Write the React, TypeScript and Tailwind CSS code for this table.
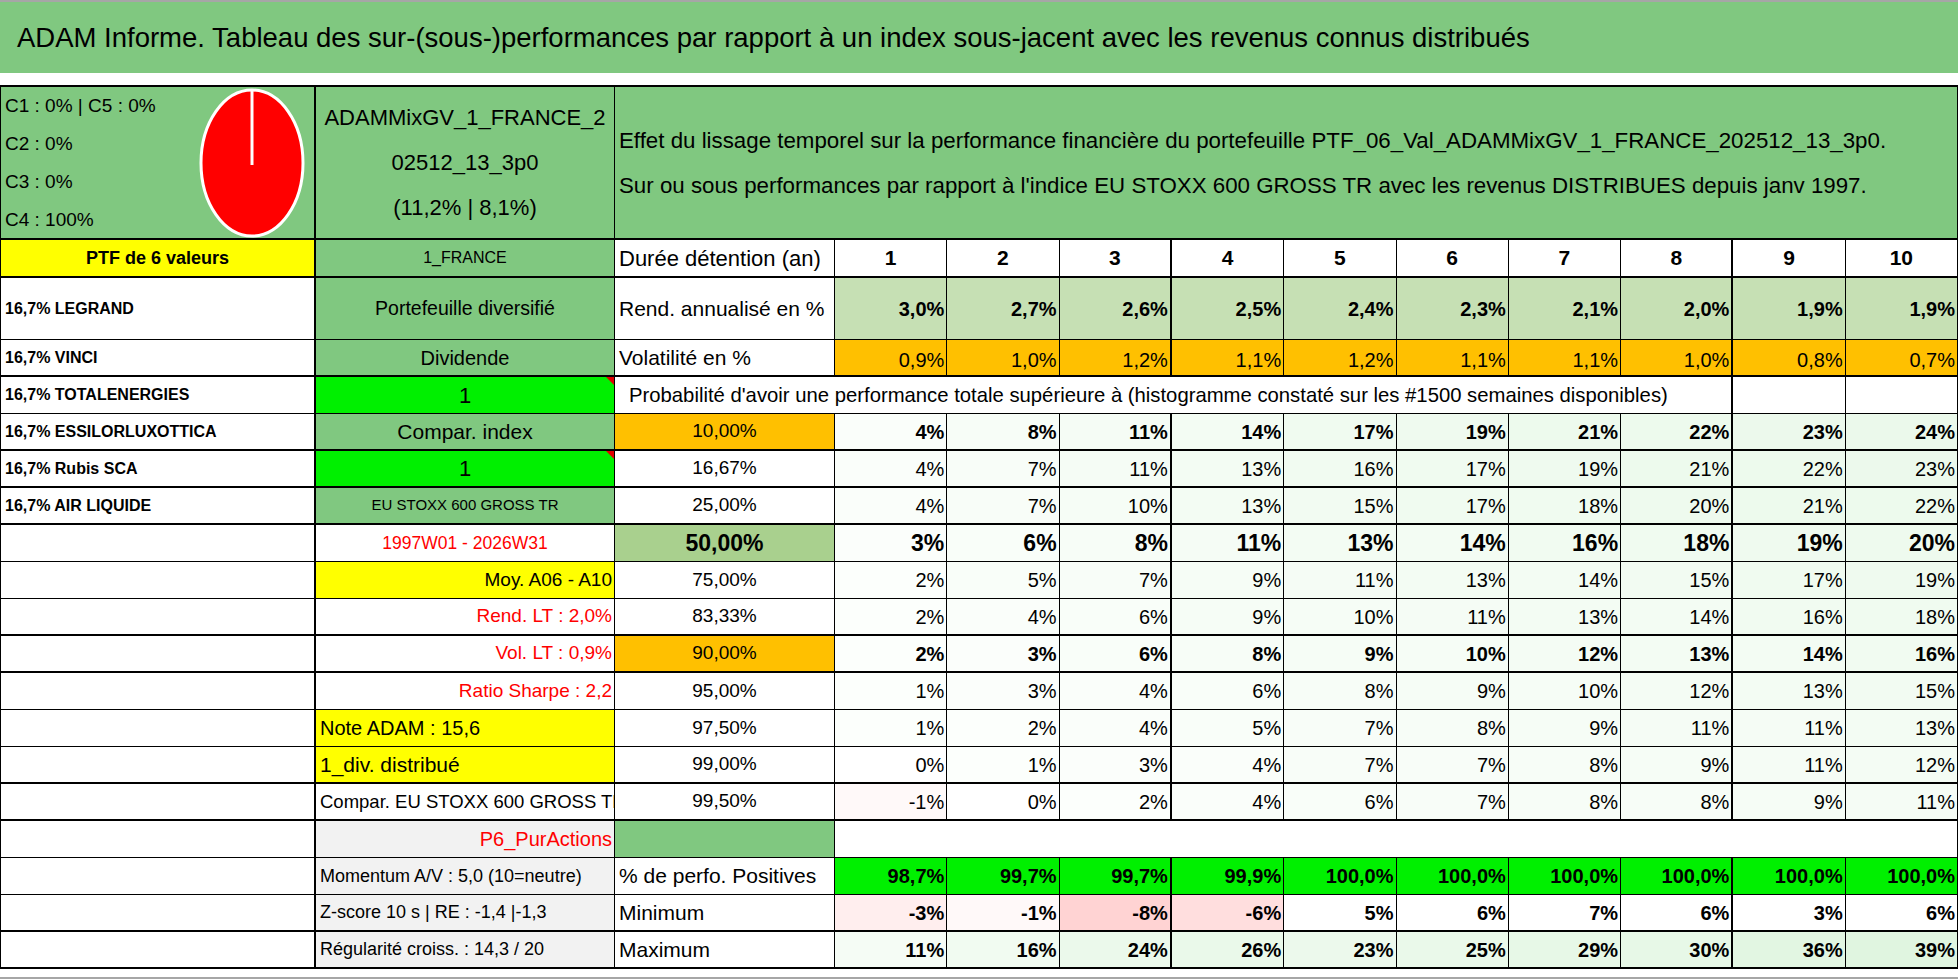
import type { CSSProperties, ReactNode } from 'react'
import clsx from 'clsx'
import { twMerge } from 'tailwind-merge'

const GREEN = 'bg-[#80c880]'
const LIME = 'bg-[#00f000]'
const YELLOW = 'bg-[#ffff00]'
const ORANGE = 'bg-[#ffc000]'
const GREY = 'bg-[#f2f2f2]'

// rows whose bottom line is drawn thick in the sheet
const THICK_ROWS = [0, 1, 3, 5, 6, 7, 10, 11, 14, 15, 18, 19]
const THICK_COLS = [0, 5, 10]
const YEARS = [1, 2, 3, 4, 5, 6, 7, 8, 9, 10]

const REND = ['3,0%', '2,7%', '2,6%', '2,5%', '2,4%', '2,3%', '2,1%', '2,0%', '1,9%', '1,9%']
const VOL = ['0,9%', '1,0%', '1,2%', '1,1%', '1,2%', '1,1%', '1,1%', '1,0%', '0,8%', '0,7%']
const POSITIVES = ['98,7%', '99,7%', '99,7%', '99,9%', '100,0%', '100,0%', '100,0%', '100,0%', '100,0%', '100,0%']
const MINIMUM = [-3, -1, -8, -6, 5, 6, 7, 6, 3, 6]
const MAXIMUM = [11, 16, 24, 26, 23, 25, 29, 30, 36, 39]

const HIST = [
  { pct: '10,00%', vals: [4, 8, 11, 14, 17, 19, 21, 22, 23, 24], bold: true, bg: ORANGE },
  { pct: '16,67%', vals: [4, 7, 11, 13, 16, 17, 19, 21, 22, 23] },
  { pct: '25,00%', vals: [4, 7, 10, 13, 15, 17, 18, 20, 21, 22] },
  { pct: '50,00%', vals: [3, 6, 8, 11, 13, 14, 16, 18, 19, 20], bold: true, big: true, bg: 'bg-[#a9d08e]' },
  { pct: '75,00%', vals: [2, 5, 7, 9, 11, 13, 14, 15, 17, 19] },
  { pct: '83,33%', vals: [2, 4, 6, 9, 10, 11, 13, 14, 16, 18] },
  { pct: '90,00%', vals: [2, 3, 6, 8, 9, 10, 12, 13, 14, 16], bold: true, bg: ORANGE },
  { pct: '95,00%', vals: [1, 3, 4, 6, 8, 9, 10, 12, 13, 15] },
  { pct: '97,50%', vals: [1, 2, 4, 5, 7, 8, 9, 11, 11, 13] },
  { pct: '99,00%', vals: [0, 1, 3, 4, 7, 7, 8, 9, 11, 12] },
  { pct: '99,50%', vals: [-1, 0, 2, 4, 6, 7, 8, 8, 9, 11] },
]

const tint = (v: number) => {
  if (v < 0) {
    const d = Math.round(Math.min(-v, 10) * 5.5)
    return `rgb(255,${255 - d},${255 - d})`
  }
  if (v === 0) return '#ffffff'
  const d = Math.min(v, 40)
  const rb = Math.round(253 - d * 0.75)
  return `rgb(${rb},${Math.round(255 - d * 0.25)},${rb})`
}

type CellProps = {
  row: number
  col: number
  span?: number
  className?: string
  style?: CSSProperties
  children?: ReactNode
}

const Cell = ({ row, col, span = 1, className, style, children }: CellProps) => {
  const last = col + span - 1
  return (
    <div
      style={style}
      className={twMerge(
        clsx(
          'relative flex min-w-0 items-center overflow-hidden whitespace-nowrap border-black bg-white',
          THICK_ROWS.includes(row) ? 'border-b-2' : 'border-b',
          THICK_COLS.includes(last) ? 'border-r-2' : 'border-r',
          span === 9 && 'col-span-9',
          span === 10 && 'col-span-10',
          span === 11 && 'col-span-11',
          className,
        ),
      )}
    >
      {children}
    </div>
  )
}

const Flag = () => (
  <span className="absolute right-0 top-0 h-0 w-0 border-l-[8px] border-t-[8px] border-l-transparent border-t-[#e00000]" />
)

const sideB: ReactNode[] = [
  <Cell key="b5" row={5} col={1} className={clsx(GREEN, 'justify-center text-[21px]')}>Compar. index</Cell>,
  <Cell key="b6" row={6} col={1} className={clsx(LIME, 'justify-center text-[22px]')}>1<Flag /></Cell>,
  <Cell key="b7" row={7} col={1} className={clsx(GREEN, 'justify-center text-[15px]')}>EU STOXX 600 GROSS TR</Cell>,
  <Cell key="b8" row={8} col={1} className="justify-center text-[17.5px] text-[#ff0000]">1997W01 - 2026W31</Cell>,
  <Cell key="b9" row={9} col={1} className={clsx(YELLOW, 'justify-end pr-0.5 text-[19px]')}>Moy. A06 - A10</Cell>,
  <Cell key="b10" row={10} col={1} className="justify-end pr-0.5 text-[19px] text-[#ff0000]">Rend. LT : 2,0%</Cell>,
  <Cell key="b11" row={11} col={1} className="justify-end pr-0.5 text-[19px] text-[#ff0000]">Vol. LT : 0,9%</Cell>,
  <Cell key="b12" row={12} col={1} className="justify-end pr-0.5 text-[19px] text-[#ff0000]">Ratio Sharpe : 2,2</Cell>,
  <Cell key="b13" row={13} col={1} className={clsx(YELLOW, 'pl-1 text-[20px]')}>Note ADAM : 15,6</Cell>,
  <Cell key="b14" row={14} col={1} className={clsx(YELLOW, 'pl-1 text-[21px]')}>1_div. distribué</Cell>,
  <Cell key="b15" row={15} col={1} className="pl-1 text-[18.5px]">Compar. EU STOXX 600 GROSS TR</Cell>,
]

const NAMES = ['16,7% ESSILORLUXOTTICA', '16,7% Rubis SCA', '16,7% AIR LIQUIDE']
const NAME_CLS = 'pl-1 text-[16px] font-bold'

export default function App() {
  return (
    <div className="flex h-[979px] w-[1958px] flex-col overflow-hidden bg-white font-['Liberation_Sans',Arial,sans-serif] text-black">
      <div className={clsx(GREEN, 'flex h-[73px] shrink-0 items-center border-t-2 border-[#a6a6a6] pl-[17px] text-[27.5px]')}>
        ADAM Informe. Tableau des sur-(sous-)performances par rapport à un index sous-jacent avec les revenus connus distribués
      </div>
      <div className="h-[12px] shrink-0" />

      <div className="grid w-[1958px] shrink-0 grid-cols-[315px_299px_220px_repeat(10,minmax(0,1fr))] grid-rows-[153px_38px_62px_repeat(17,37px)] border-l border-t-2 border-black">
        {/* header */}
        <Cell row={0} col={0} className={clsx(GREEN, 'items-start justify-between pl-1 pr-[9px]')}>
          <div className="text-[19px] leading-[38px]">
            <div>C1 : 0% | C5 : 0%</div>
            <div>C2 : 0%</div>
            <div>C3 : 0%</div>
            <div>C4 : 100%</div>
          </div>
          <svg className="self-center" width="106" height="150" viewBox="0 0 106 150">
            <ellipse cx="53" cy="75" rx="51" ry="73" fill="#ff0000" stroke="#ffffff" strokeWidth="3" />
            <line x1="53" y1="2" x2="53" y2="77" stroke="#ffffff" strokeWidth="3" />
          </svg>
        </Cell>
        <Cell row={0} col={1} className={clsx(GREEN, 'flex-col justify-center text-[22px] leading-[45px]')}>
          <div>ADAMMixGV_1_FRANCE_2</div>
          <div>02512_13_3p0</div>
          <div>(11,2% | 8,1%)</div>
        </Cell>
        <Cell row={0} col={2} span={11} className={clsx(GREEN, 'flex-col items-start justify-center pl-1 text-[22.3px] leading-[45px]')}>
          <div>Effet du lissage temporel sur la performance financière du portefeuille PTF_06_Val_ADAMMixGV_1_FRANCE_202512_13_3p0.</div>
          <div>Sur ou sous performances par rapport à l'indice EU STOXX 600 GROSS TR avec les revenus DISTRIBUES depuis janv 1997.</div>
        </Cell>

        {/* durée */}
        <Cell row={1} col={0} className={clsx(YELLOW, 'justify-center text-[18px] font-bold')}>PTF de 6 valeurs</Cell>
        <Cell row={1} col={1} className={clsx(GREEN, 'justify-center text-[16px]')}>1_FRANCE</Cell>
        <Cell row={1} col={2} className="pl-1 text-[22px]">Durée détention (an)</Cell>
        {YEARS.map((n) => (
          <Cell key={n} row={1} col={2 + n} className="justify-center text-[21px] font-bold">{n}</Cell>
        ))}

        {/* rendement */}
        <Cell row={2} col={0} className={NAME_CLS}>16,7% LEGRAND</Cell>
        <Cell row={2} col={1} className={clsx(GREEN, 'justify-center text-[19.5px]')}>Portefeuille diversifié</Cell>
        <Cell row={2} col={2} className="pl-1 text-[21px]">Rend. annualisé en %</Cell>
        {REND.map((v, i) => (
          <Cell key={i} row={2} col={3 + i} className="justify-end bg-[#c6e0b4] pr-0.5 text-[20px] font-bold">{v}</Cell>
        ))}

        {/* volatilité */}
        <Cell row={3} col={0} className={NAME_CLS}>16,7% VINCI</Cell>
        <Cell row={3} col={1} className={clsx(GREEN, 'justify-center text-[20px]')}>Dividende</Cell>
        <Cell row={3} col={2} className="pl-1 text-[21px]">Volatilité en %</Cell>
        {VOL.map((v, i) => (
          <Cell key={i} row={3} col={3 + i} className={clsx(ORANGE, 'justify-end pr-0.5 pt-1 text-[20px]')}>{v}</Cell>
        ))}

        {/* probabilité */}
        <Cell row={4} col={0} className={NAME_CLS}>16,7% TOTALENERGIES</Cell>
        <Cell row={4} col={1} className={clsx(LIME, 'justify-center text-[22px]')}>1<Flag /></Cell>
        <Cell row={4} col={2} span={9} className="pl-[14px] text-[20.3px]">
          Probabilité d'avoir une performance totale supérieure à (histogramme constaté sur les #1500 semaines disponibles)
        </Cell>
        <Cell row={4} col={11} />
        <Cell row={4} col={12} />

        {HIST.map((h, i) => {
          const row = 5 + i
          return [
            <Cell key={`a${row}`} row={row} col={0} className={NAME_CLS}>{NAMES[i] ?? ''}</Cell>,
            sideB[i],
            <Cell
              key={`c${row}`}
              row={row}
              col={2}
              className={clsx('justify-center', h.bg, h.big ? 'text-[23px] font-bold' : 'text-[19px]')}
            >
              {h.pct}
            </Cell>,
            ...h.vals.map((v, j) => (
              <Cell
                key={`v${row}-${j}`}
                row={row}
                col={3 + j}
                style={{ backgroundColor: tint(v) }}
                className={clsx('justify-end pr-0.5', h.big ? 'text-[23px]' : 'text-[20px]', h.bold && 'font-bold')}
              >
                {v}%
              </Cell>
            )),
          ]
        })}

        {/* synthèse */}
        <Cell row={16} col={0} />
        <Cell row={16} col={1} className={clsx(GREY, 'justify-end pr-0.5 text-[20px] text-[#ff0000]')}>P6_PurActions</Cell>
        <Cell row={16} col={2} className={GREEN} />
        <Cell row={16} col={3} span={10} />

        <Cell row={17} col={0} />
        <Cell row={17} col={1} className={clsx(GREY, 'pl-1 text-[18px]')}>Momentum A/V : 5,0 (10=neutre)</Cell>
        <Cell row={17} col={2} className="pl-1 text-[21px]">% de perfo. Positives</Cell>
        {POSITIVES.map((v, i) => (
          <Cell key={i} row={17} col={3 + i} className={clsx(LIME, 'justify-end pr-0.5 text-[20px] font-bold')}>{v}</Cell>
        ))}

        <Cell row={18} col={0} />
        <Cell row={18} col={1} className={clsx(GREY, 'pl-1 text-[18px]')}>Z-score 10 s | RE : -1,4 |-1,3</Cell>
        <Cell row={18} col={2} className="pl-1 text-[21px]">Minimum</Cell>
        {MINIMUM.map((v, i) => (
          <Cell
            key={i}
            row={18}
            col={3 + i}
            style={{ backgroundColor: v < 0 ? tint(v) : '#ffffff' }}
            className="justify-end pr-0.5 text-[20px] font-bold"
          >
            {v}%
          </Cell>
        ))}

        <Cell row={19} col={0} />
        <Cell row={19} col={1} className={clsx(GREY, 'pl-1 text-[18px]')}>Régularité croiss. : 14,3 / 20</Cell>
        <Cell row={19} col={2} className="pl-1 text-[21px]">Maximum</Cell>
        {MAXIMUM.map((v, i) => (
          <Cell key={i} row={19} col={3 + i} style={{ backgroundColor: tint(v) }} className="justify-end pr-0.5 text-[20px] font-bold">
            {v}%
          </Cell>
        ))}
      </div>

      <div className="flex-1" />
      <div className="h-[2px] shrink-0 bg-[#a6a6a6]" />
    </div>
  )
}
